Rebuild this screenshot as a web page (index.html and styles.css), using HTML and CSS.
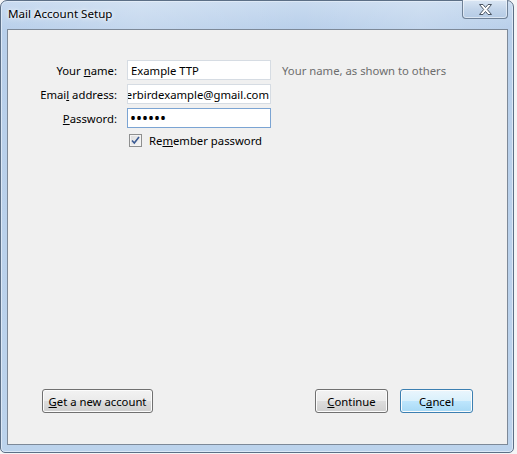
FILE: index.html
```html
<!DOCTYPE html>
<html lang="en">
<head>
  <meta charset="UTF-8" />
  <title>Mail Account Setup</title>
  <link rel="stylesheet" href="styles.css">
</head>
<body>
  <div class="window">
    <div class="titlebar">
      <span class="title">Mail Account Setup</span>
      <button class="close" title="Close">
        <svg width="15" height="13" viewBox="0 0 15 13">
          <path d="M1.5 1.5h3.5l2.5 3 2.5-3h3.5l-4.2 5 4.2 5h-3.5l-2.5-3-2.5 3h-3.5l4.2-5z"
                fill="#fff" stroke="#4a5563" stroke-width="1" stroke-linejoin="round"/>
        </svg>
      </button>
    </div>

    <div class="client">
      <div class="form">
        <label for="name">Your <u>n</u>ame:</label>
        <input type="text" id="name" class="field" value="Example TTP">
        <span class="hint">Your name, as shown to others</span>

        <label for="email">Emai<u>l</u> address:</label>
        <div class="field email" id="email"><span>erbirdexample@gmail.com</span></div>
        <span></span>

        <label for="pass"><u>P</u>assword:</label>
        <input type="password" id="pass" class="field focused" value="secret">
        <span></span>

        <span></span>
        <label class="remember">
          <span class="check">
            <svg width="9" height="9" viewBox="0 0 9 9">
              <path d="M1 4.5l2.3 2.5 4.7-6" fill="none" stroke="#3a5a93" stroke-width="1.6"/>
            </svg>
          </span>
          <span>Re<u>m</u>ember password</span>
        </label>
      </div>

      <div class="footer">
        <button class="btn wide"><u>G</u>et a new account</button>
        <div class="right">
          <button class="btn"><u>C</u>ontinue</button>
          <button class="btn active">C<u>a</u>ncel</button>
        </div>
      </div>
    </div>
  </div>
</body>
</html>
```

FILE: styles.css
```css
body {
  margin: 0;
  background: #f4f5f6;
  font-family: "Noto Sans", "Open Sans", sans-serif;
  font-size: 11.3px;
  color: #000;
}
.window {
  width: 512px;
  height: 451px;
  border: 1px solid #5c6f86;
  border-radius: 7px 7px 5px 5px;
  background: linear-gradient(180deg, #c9dbf0 0px, #b8cfea 30px, #bcd3ec 100%);
  box-shadow: inset 0 0 0 1px #dce8f6;
  display: flex;
  flex-direction: column;
}
.titlebar {
  height: 28px;
  display: flex;
  justify-content: space-between;
  background: linear-gradient(90deg, rgba(255,255,255,0) 0, rgba(255,255,255,0.18) 140px, rgba(255,255,255,0) 300px, rgba(255,255,255,0.15) 420px, rgba(255,255,255,0) 100%);
}
.title {
  padding: 5px 0 0 7px;
  font-size: 11.6px;
  text-shadow: 0 0 6px #fff, 0 0 3px #fff;
}
.close {
  width: 46px;
  height: 19px;
  margin: -1px 5px 0 0;
  padding: 0;
  border: 1px solid #6f8197;
  border-top: none;
  border-radius: 0 0 4px 4px;
  background: linear-gradient(180deg, #dae6f4 0, #c3d5ea 50%, #b5cbe5 100%);
  box-shadow: inset 0 0 0 1px rgba(255,255,255,0.5);
  display: flex;
  align-items: center;
  justify-content: center;
}
.client {
  flex: 1;
  margin: 0 5px 7px 6px;
  border: 1px solid #7d8998;
  background: #f0f0f0;
  display: flex;
  flex-direction: column;
}
.form {
  display: grid;
  grid-template-columns: 109px 144px auto;
  column-gap: 10px;
  row-gap: 4px;
  align-items: center;
  padding-top: 30px;
}
.form > label {
  text-align: right;
}
.field {
  box-sizing: border-box;
  width: 144px;
  height: 20px;
  margin: 0;
  padding: 0 3px;
  border: 1px solid #d6dce3;
  background-color: #fff;
  font: inherit;
  outline: none;
}
.email {
  display: flex;
  justify-content: flex-end;
  align-items: center;
  overflow: hidden;
  white-space: nowrap;
  padding: 0 1px 0 0;
}
.focused {
  border-color: #7ba4d3;
  font-size: 16px;
  padding: 0 2px;
}
.hint {
  color: #6d6d6d;
  padding-left: 1px;
}
.remember {
  grid-column: 2 / 4;
  display: flex;
  align-items: center;
  gap: 7px;
  margin-top: 1px;
  padding-left: 2px;
}
.check {
  box-sizing: border-box;
  width: 13px;
  height: 13px;
  border: 1px solid #8e8f8f;
  background: linear-gradient(135deg, #dcdcdc 0, #f7f7f7 100%);
  box-shadow: inset 0 0 0 1px #f4f4f4;
  display: flex;
  align-items: center;
  justify-content: center;
}
.footer {
  margin-top: auto;
  padding: 0 34px 31px 34px;
  display: flex;
  justify-content: space-between;
}
.right {
  display: flex;
  gap: 12px;
}
.btn {
  height: 24px;
  width: 73px;
  padding: 0;
  border: 1px solid #707070;
  border-radius: 3px;
  background: linear-gradient(180deg, #f2f2f2 0, #ebebeb 50%, #dddddd 50%, #cfcfcf 100%);
  box-shadow: inset 0 0 0 1px #fcfcfc;
  font: inherit;
  color: #000;
}
.btn.wide {
  width: 111px;
}
.btn.active {
  border-color: #3c7fb1;
  background: linear-gradient(180deg, #eaf6fd 0, #d9f0fc 50%, #bee6fd 50%, #a7d9f5 100%);
}
```
